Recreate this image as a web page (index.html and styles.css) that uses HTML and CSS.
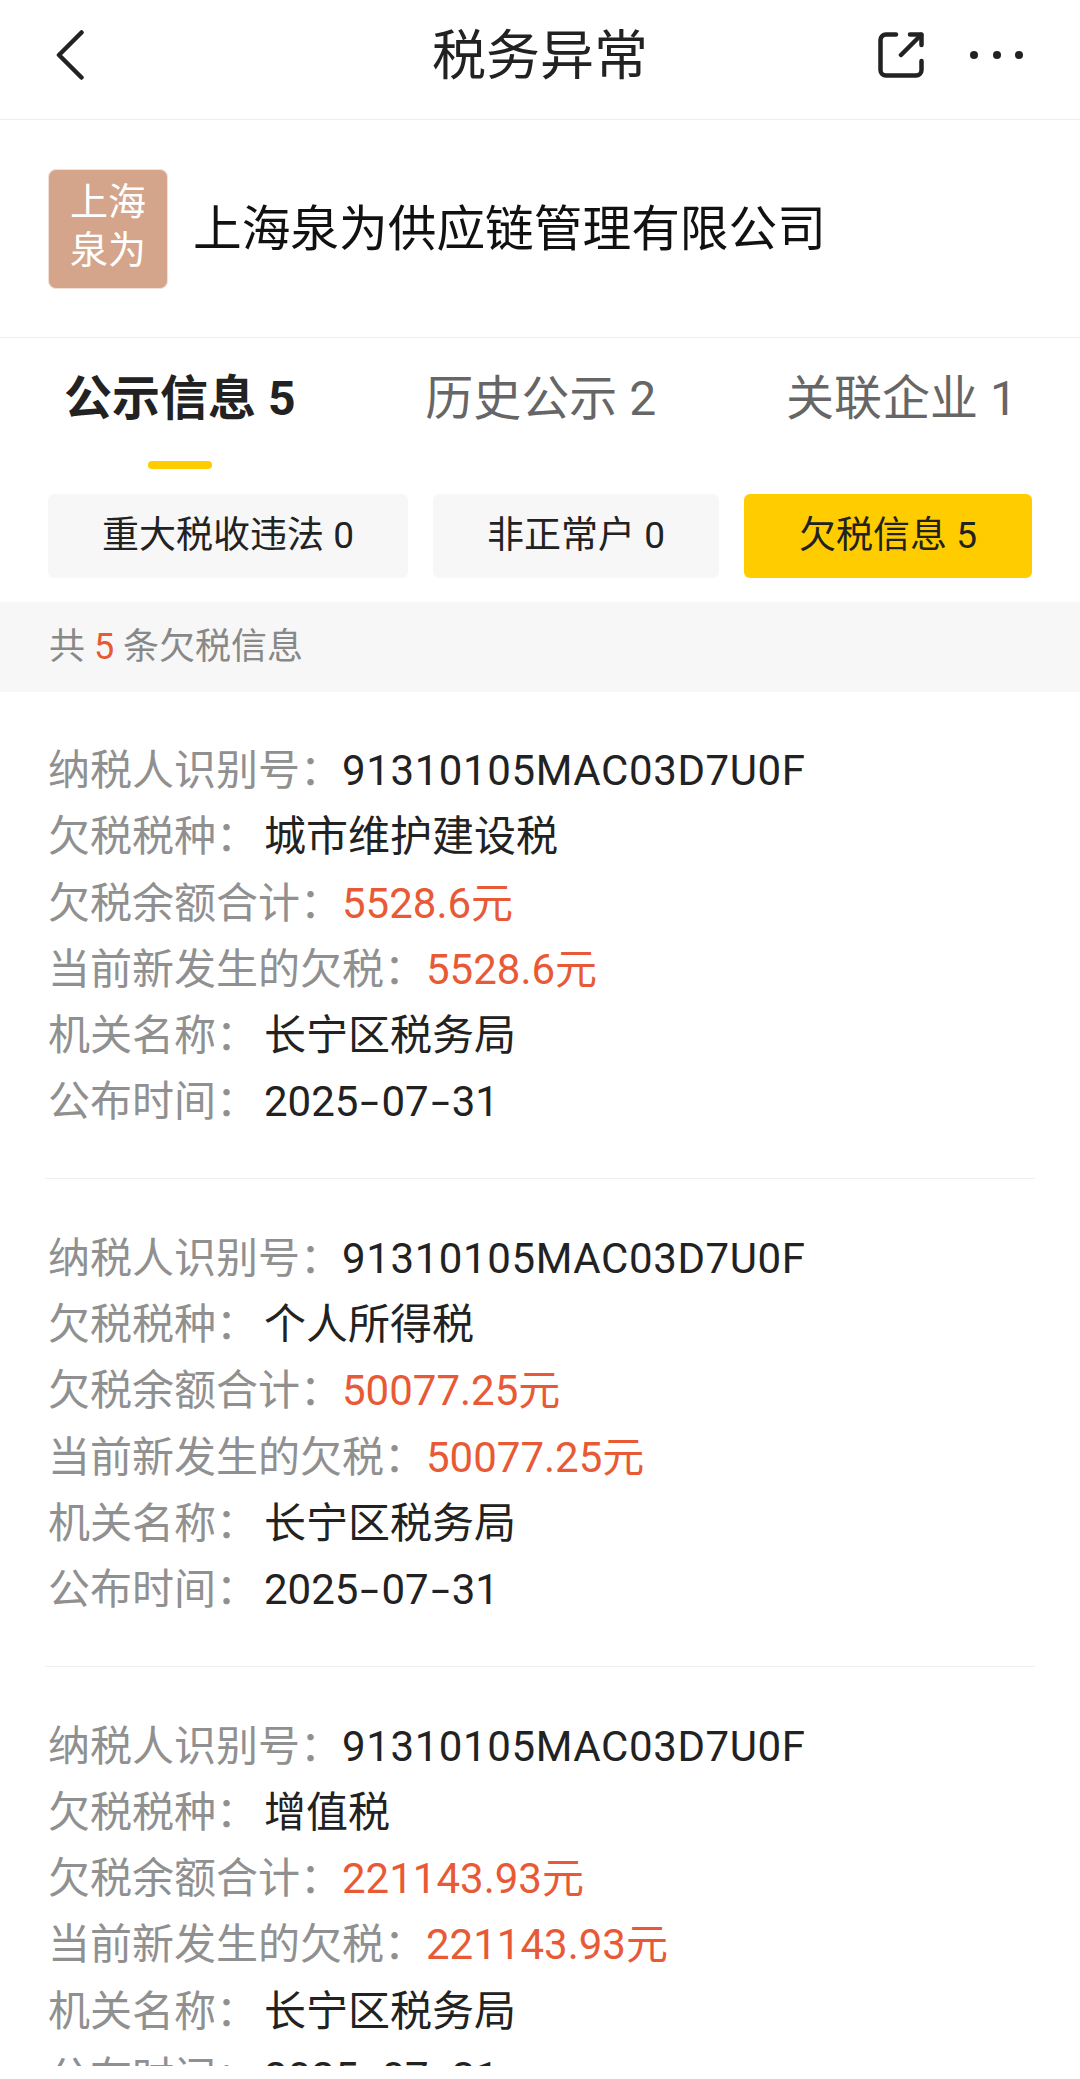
FILE: index.html
```html
<!DOCTYPE html>
<html lang="zh-CN">
<head>
    <meta charset="UTF-8">
    <meta name="viewport" content="width=device-width, initial-scale=1.0">
    <title>税务异常</title>
    <link rel="stylesheet" href="styles.css">
</head>
<body>
<div class="page">
    <header class="top-bar">
        <div class="top-left">
            <svg class="icon-back" width="28" height="50" viewBox="0 0 28 50" fill="none" stroke="#222" stroke-width="4.5" stroke-linecap="round" stroke-linejoin="round">
                <path d="M25.5 2.5 3 25l22.5 22.5"/>
            </svg>
        </div>
        <h1 class="top-title">税务异常</h1>
        <div class="top-right">
            <svg class="icon-share" width="46" height="46" viewBox="0 0 46 46" fill="none" stroke="#222" stroke-width="4.5" stroke-linecap="round" stroke-linejoin="round">
                <path d="M18 2.5H8A5.5 5.5 0 0 0 2.500 8v30A5.500 5.500 0 0 0 8 43.500h30a5.500 5.500 0 0 0 5.500-5.500v-9"/>
                <path d="M32 2.500h11.500V13"/>
                <path d="M23 23 43 3"/>
            </svg>
            <div class="icon-more">
                <span></span><span></span><span></span>
            </div>
        </div>
    </header>

    <section class="company">
        <div class="company-logo">上海<br>泉为</div>
        <div class="company-name">上海泉为供应链管理有限公司</div>
    </section>

    <nav class="tabs">
        <div class="tab active">公示信息 5</div>
        <div class="tab">历史公示 2</div>
        <div class="tab">关联企业 1</div>
    </nav>

    <div class="chips">
        <div class="chip">重大税收违法 0</div>
        <div class="chip">非正常户 0</div>
        <div class="chip active">欠税信息 5</div>
    </div>

    <div class="summary">共 <em>5</em> 条欠税信息</div>

    <main>
        <article class="record">
            <div class="row"><span class="label">纳税人识别号：</span><span class="value code">91310105MAC03D7U0F</span></div>
            <div class="row"><span class="label">欠税税种：</span><span class="value">城市维护建设税</span></div>
            <div class="row"><span class="label">欠税余额合计：</span><span class="value money">5528.6元</span></div>
            <div class="row"><span class="label">当前新发生的欠税：</span><span class="value money">5528.6元</span></div>
            <div class="row"><span class="label">机关名称：</span><span class="value">长宁区税务局</span></div>
            <div class="row"><span class="label">公布时间：</span><span class="value">2025<span class="dash">-</span>07<span class="dash">-</span>31</span></div>
        </article>
        <article class="record">
            <div class="row"><span class="label">纳税人识别号：</span><span class="value code">91310105MAC03D7U0F</span></div>
            <div class="row"><span class="label">欠税税种：</span><span class="value">个人所得税</span></div>
            <div class="row"><span class="label">欠税余额合计：</span><span class="value money">50077.25元</span></div>
            <div class="row"><span class="label">当前新发生的欠税：</span><span class="value money">50077.25元</span></div>
            <div class="row"><span class="label">机关名称：</span><span class="value">长宁区税务局</span></div>
            <div class="row"><span class="label">公布时间：</span><span class="value">2025<span class="dash">-</span>07<span class="dash">-</span>31</span></div>
        </article>
        <article class="record">
            <div class="row"><span class="label">纳税人识别号：</span><span class="value code">91310105MAC03D7U0F</span></div>
            <div class="row"><span class="label">欠税税种：</span><span class="value">增值税</span></div>
            <div class="row"><span class="label">欠税余额合计：</span><span class="value money">221143.93元</span></div>
            <div class="row"><span class="label">当前新发生的欠税：</span><span class="value money">221143.93元</span></div>
            <div class="row"><span class="label">机关名称：</span><span class="value">长宁区税务局</span></div>
            <div class="row"><span class="label">公布时间：</span><span class="value">2025<span class="dash">-</span>07<span class="dash">-</span>31</span></div>
        </article>
    </main>
</div>
</body>
</html>
```

FILE: styles.css
```css
html, body {
    height: 100%;
    overflow: hidden;
}
body {
    margin: 0;
    background-color: #fff;
    color: #222;
    font-family: Roboto, "Noto Sans CJK SC", sans-serif;
}
.page {
    height: 2066px;
    overflow: hidden;
}

/* top bar */
.top-bar {
    display: grid;
    grid-template-columns: 1fr auto 1fr;
    align-items: center;
    height: 109px;
    padding-bottom: 10px;
    border-bottom: 1px solid #eee;
}
.top-left {
    display: flex;
    padding-left: 56px;
}
.top-title {
    margin: 5px 0 0;
    font-size: 54px;
    font-weight: 400;
    line-height: 74px;
}
.top-right {
    display: flex;
    justify-content: flex-end;
    align-items: center;
    gap: 46px;
    padding-right: 57px;
}
.icon-more {
    display: flex;
    gap: 14.5px;
}
.icon-more span {
    width: 8px;
    height: 8px;
    border-radius: 50%;
    background-color: #222;
}

/* company */
.company {
    display: flex;
    align-items: center;
    gap: 25px;
    height: 217px;
    padding-left: 48px;
    border-bottom: 1px solid #eee;
}
.company-logo {
    box-sizing: border-box;
    width: 120px;
    height: 120px;
    border: 1px solid #f0e0d6;
    border-radius: 8px;
    background-color: #d4a58b;
    color: #fff;
    font-size: 38px;
    line-height: 48px;
    text-align: center;
    padding-top: 8px;
}
.company-name {
    font-size: 48.7px;
    line-height: 64px;
    padding-top: 2px;
    color: #111;
}

/* tabs */
.tabs {
    display: flex;
    justify-content: space-between;
    padding: 31px 63px 25px 64px;
}
.tab {
    font-size: 48px;
    line-height: 60px;
    color: #666;
}
.tab::after {
    content: "";
    display: block;
    width: 64px;
    height: 8px;
    margin: 32px auto 0;
    border-radius: 4px;
}
.tab.active {
    color: #222;
    font-weight: 700;
}
.tab.active::after {
    background-color: #ffcc00;
}

/* filter chips */
.chips {
    display: flex;
    justify-content: space-between;
    padding: 0 48px 24px;
}
.chip {
    height: 84px;
    padding: 0 54px;
    border-radius: 6px;
    background-color: #f7f7f7;
    font-size: 37px;
    line-height: 84px;
    white-space: nowrap;
}
.chip.active {
    padding: 0 55px;
    background-color: #ffcc00;
}

.summary {
    height: 90px;
    padding-left: 49px;
    background-color: #f7f7f7;
    color: #888;
    font-size: 36px;
    line-height: 90px;
}
.summary em {
    font-style: normal;
    color: #e85a35;
}

/* tax records */
.record {
    margin: 0 45px;
    padding: 46px 3px 42px;
    border-bottom: 1px solid #eee;
}
.record + .record {
    padding-top: 47px;
}
.row {
    display: flex;
    font-size: 42px;
    line-height: 66.3px;
}
.label {
    min-width: 216px;
    color: #909090;
    white-space: nowrap;
}
.value {
    color: #222;
    white-space: nowrap;
}
.value.code {
    letter-spacing: 0.6px;
}
.value.money {
    color: #e85a35;
}
/* the date hyphens sit wider than the font's own glyph */
.dash {
    display: inline-block;
    width: 23px;
    text-align: center;
    transform: scaleX(1.6);
}
```
